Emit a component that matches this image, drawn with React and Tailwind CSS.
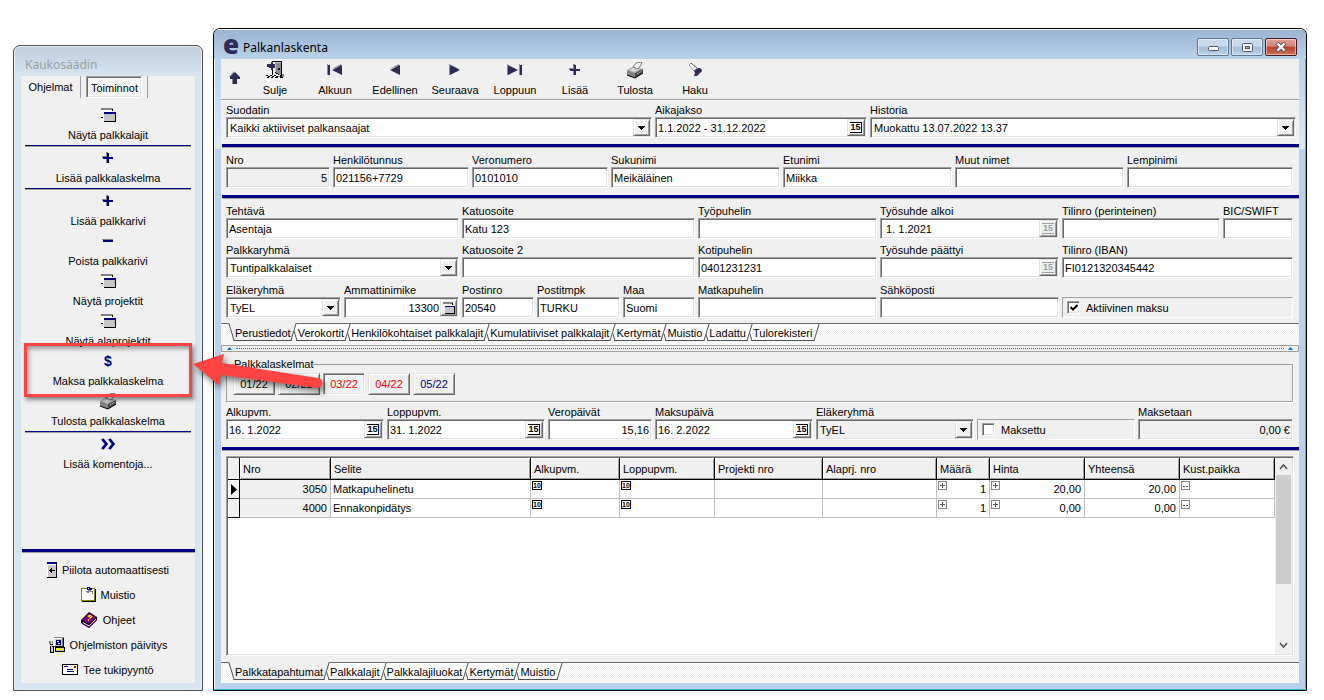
import React, { useId, useState } from "react";
import clsx from "clsx";

const sunken =
    "border border-t-[#a0a0a0] border-l-[#a0a0a0] border-b-white border-r-white shadow-[inset_1px_1px_0_#696969,inset_-1px_-1px_0_#e3e3e3]";
const raised =
    "border border-t-[#e3e3e3] border-l-[#e3e3e3] border-b-[#696969] border-r-[#696969] shadow-[inset_1px_1px_0_#fff,inset_-1px_-1px_0_#a0a0a0]";
const hatch = "bg-[repeating-conic-gradient(#f0f0f0_0_25%,#fff_0_50%)] bg-[length:2px_2px]";

/* ---------- icons ---------- */

const WindowsIcon = () => (
    <svg width="15" height="14" viewBox="0 0 15 14" shapeRendering="crispEdges" aria-hidden="true">
        <path fill="#848484" d="M0 0h12v2H0z" />
        <path fill="#fff" d="M0 2h12v1H0zM0 2h2v7H0z" />
        <path fill="#000" d="M11 1h1v2h-1zM0 9h3v1H0z" />
        <path fill="#fff" d="M2 3h12v1H2zM2 3h1v10H2z" />
        <path fill="#c6c6c6" d="M3 6h11v7H3z" />
        <path fill="#000084" d="M3 4h12v2H3z" />
        <path fill="#000" d="M14 6h1v8h-1zM3 13h12v1H3z" />
    </svg>
);

const PlusIcon = ({ color = "#000084" }) => (
    <svg width="12" height="12" viewBox="0 0 12 12" shapeRendering="crispEdges" aria-hidden="true">
        <path fill="#848484" d="M4 0h2v4H4zM0 4h5v2H0zM4 6h1v5H4z" />
        <path fill={color} d="M5 1h2v4h4v2H7v4H5V7H1V5h4z" />
    </svg>
);

const MinusIcon = () => (
    <svg width="12" height="4" viewBox="0 0 12 4" shapeRendering="crispEdges" aria-hidden="true">
        <path fill="#848484" d="M0 0h11v1H0z" />
        <path fill="#000084" d="M1 1h10v2H1z" />
    </svg>
);

const DollarIcon = () => <b className="text-[14px] leading-[18px] text-[#000084]" aria-hidden="true">$</b>;

const MoreIcon = () => (
    <svg width="16" height="12" viewBox="0 0 16 12" aria-hidden="true">
        <path fill="none" stroke="#848484" strokeWidth="2" d="M1.5 1l4 5-4 5M8.500 1l4 5-4 5" />
        <path fill="none" stroke="#000084" strokeWidth="2.500" d="M2.500 1l4 5-4 5M9.500 1l4 5-4 5" />
    </svg>
);

const PrinterIcon = () => (
    <svg width="17" height="17" viewBox="0 0 17 17" aria-hidden="true">
        <path fill="#a5a5a5" d="M0 8l7-4 9 3-8 4z" />
        <path fill="#d6d6d6" d="M2 8l5-3 6 2-6 3z" />
        <path fill="#848484" d="M0 8l8 3v5l-8-3z" />
        <path fill="#4a4a4a" d="M8 11l8-4v4l-8 5z" />
        <path fill="#fff" stroke="#444" strokeWidth=".7" d="M6 5l3-4 6-1-1 3-3 4z" />
        <path stroke="#000" strokeWidth="1" fill="none" d="M0 13l8 3 8-5" />
        <path stroke="#e7e7e7" strokeWidth="1" strokeDasharray="1 1" d="M10 12l5-3" />
    </svg>
);

const DoorIcon = () => (
    <svg width="19" height="18" viewBox="0 0 19 18" shapeRendering="crispEdges" aria-hidden="true">
        <path fill="#000" d="M6 0h10v15h-2V2H7v12H6z" />
        <path fill="#fff" d="M7 1h2v12H7z" />
        <path fill="#8c8c8c" d="M9 1h6v13h-2l-4-3z" />
        <path fill="#c6c6c6" d="M9 2h1v9H9zM10 1h5v1h-5z" />
        <path fill="#000" d="M12 7h2v2h-2zM9 11h1v1H9zM10 12h2v1h-2zM12 13h1v1h-1z" />
        <path fill="#2b2b55" d="M1 3h4V1h2v2h2v4H7v2H5V7H3V6H1z" />
        <path fill="#000" d="M0 14h2v1H0zM4 14h2v1H4zM8 14h2v1H8zM2 15h2v1H2zM6 15h2v1H6zM10 15h2v1h-2zM1 16h2v1H1zM5 16h2v1H5zM9 16h3v1H9zM14 15h3v2h-3z" />
        <path fill="#848484" d="M16 13h2v3h-2zM12 15h2v1h-2z" />
    </svg>
);

const FlashlightIcon = () => (
    <svg width="15" height="15" viewBox="0 0 15 15" aria-hidden="true">
        <path fill="#fff" stroke="#888" strokeWidth=".8" d="M1 2l2-2 6 5-3 3z" />
        <path stroke="#222" strokeDasharray="1 1" d="M3 0l6 5" />
        <path fill="#2b2b55" d="M6 8l4-3h2l2 2v1l-5 5H6l1-3z" />
        <path fill="#84206a" d="M8 11l3-2-1 3z" />
    </svg>
);

const UpIcon = () => (
    <svg width="12" height="14" viewBox="0 0 12 14" aria-hidden="true">
        <path fill="#8c8c8c" d="M5 0l-5 6h3v7h3z" />
        <path fill="#2b2b55" d="M6 1l5 5v2H8v5H4V8H1V6z" />
    </svg>
);

const FirstIcon = () => (
    <svg width="16" height="12" viewBox="0 0 16 12" aria-hidden="true">
        <path fill="#8c8c8c" d="M0 0h1v11H0zM14 0L4 5l10-3z" />
        <path fill="#2b2b55" d="M1 1h2v10H1zM15 1v10L5 6z" />
    </svg>
);
const PrevIcon = () => (
    <svg width="12" height="12" viewBox="0 0 12 12" aria-hidden="true">
        <path fill="#8c8c8c" d="M10 0L0 5l10-3z" />
        <path fill="#2b2b55" d="M11 1v10L1 6z" />
    </svg>
);
const NextIcon = () => (
    <svg width="12" height="12" viewBox="0 0 12 12" aria-hidden="true">
        <path fill="#8c8c8c" d="M0 0h1v11H0zM1 0l9 5H7z" />
        <path fill="#2b2b55" d="M1 1v10l10-5z" />
    </svg>
);
const LastIcon = () => (
    <svg width="16" height="12" viewBox="0 0 16 12" aria-hidden="true">
        <path fill="#8c8c8c" d="M0 0h1v11H0zM12 0h1v11h-1z" />
        <path fill="#2b2b55" d="M1 1v10l10-5zM13 1h2v10h-2z" />
    </svg>
);

const HideIcon = () => (
    <svg width="10" height="16" viewBox="0 0 10 16" shapeRendering="crispEdges" aria-hidden="true">
        <path fill="#000" d="M0 0h10v16H0z" />
        <path fill="#c6c6c6" d="M1 3h8v12H1z" />
        <path fill="#000084" d="M0 0h9v2H0z" />
        <path fill="#fff" d="M0 2h9v1H0zM0 2h1v13H0z" />
        <path fill="#000" d="M2 8h6v1H2zM3 7h1v3H3zM4 6h1v5H4z" />
    </svg>
);

const NoteIcon = () => (
    <svg width="15" height="15" viewBox="0 0 15 15" shapeRendering="crispEdges" aria-hidden="true">
        <path fill="#848400" d="M0 1h14v13H0z" />
        <path fill="#fff" d="M1 2h12v11H1z" />
        <path fill="#000" d="M14 2h1v13H1v-1h13z" />
        <path fill="#848484" d="M5 4h2v-1h3v1h2v3h-1V5H8v1H6V5H5z" />
        <path fill="#000084" d="M6 0h3v3H6zM9 1h2v2H9z" />
        <path fill="#fff" d="M7 1h1v1H7z" />
    </svg>
);

const BookIcon = () => (
    <svg width="17" height="16" viewBox="0 0 17 16" aria-hidden="true">
        <path fill="#000" d="M0 8l8-8 8 5v3l-8 8-8-5z" />
        <path fill="#840084" d="M1 8l7-7 7 4-7 7z" />
        <path fill="#fff" d="M2 10l6 3.500 7-7v1l-7 7-6-3.500z" />
        <path fill="#840084" d="M1 11l7 4 8-8v1l-8 8-7-4z" />
        <path fill="none" stroke="#ff0" strokeWidth="1.500" d="M7 4.500l2-1 1.500 1-2 2M7 8l1 .5" />
    </svg>
);

const ComputerIcon = () => (
    <svg width="16" height="16" viewBox="0 0 16 16" shapeRendering="crispEdges" aria-hidden="true">
        <path fill="#848484" d="M5 0h10v10H5z" />
        <path fill="#000" d="M14 1h1v9H6V9h8zM6 10h10v5H6z" />
        <path fill="#fff" d="M5 1h8v1H5zM5 1h1v8H5z" />
        <path fill="#c6c6c6" d="M6 2h7v7H6zM7 11h8v3H7z" />
        <path fill="#000084" d="M7 3h5v5H7z" />
        <path fill="#fff" d="M8 4h2v1H8zM9 6h2v1H9z" />
        <path fill="#ffff00" d="M7 11h3v2H7zM11 12h3v1h-3z" />
        <path fill="#848484" d="M0 4h2v3H0zM3 4h1v3H3z" />
        <path fill="#000" d="M1 7h3v1H1zM1 9h4v7H1z" />
        <path fill="#c6c6c6" d="M2 8h1v2H2zM2 10h2v5H2z" />
    </svg>
);

const MailIcon = () => (
    <svg width="16" height="11" viewBox="0 0 16 11" shapeRendering="crispEdges" aria-hidden="true">
        <path fill="#000" d="M0 0h16v11H0z" />
        <path fill="#fff" d="M1 1h14v9H1z" />
        <path fill="#000084" d="M2 2h4v1H2zM5 5h6v1H5zM5 7h7v1H5z" />
        <path fill="#e00000" d="M12 2h2v2h-2z" />
    </svg>
);

const DownArrow = () => (
    <svg width="7" height="4" viewBox="0 0 7 4" shapeRendering="crispEdges" aria-hidden="true">
        <path d="M0 0h7v1H6v1H5v1H4v1H3V3H2V2H1V1H0z" />
    </svg>
);

/* ---------- form parts ---------- */

const CalendarButton = ({ label, disabled }) => (
    <button
        type="button"
        aria-label={`${label}: kalenteri`}
        disabled={disabled}
        className={clsx("flex w-[18px] shrink-0 items-center justify-center bg-[#f0f0f0]", raised)}
    >
        <span
            className={clsx(
                "flex h-[11px] w-3 items-center justify-center border-y text-[9px] leading-[9px] font-bold",
                disabled ? "border-[#a0a0a0] text-[#a0a0a0]" : "border-black border-r border-r-[#000084] bg-white text-black"
            )}
        >
            15
        </span>
    </button>
);

const Field = ({ label, value = "", type = "text", right, gray, disabled }) => {
    const id = useId();
    return (
        <div className="min-w-0">
            <label htmlFor={id} className="block whitespace-nowrap">{label}</label>
            <div className={clsx("relative flex h-[21px] p-px", sunken, gray ? "bg-[#f0f0f0]" : "bg-white")}>
                {type === "select" ? (
                    <>
                        <select id={id} className="w-full min-w-0 appearance-none pl-[2px] outline-none">
                            <option>{value}</option>
                        </select>
                        <span className={clsx("pointer-events-none absolute inset-y-px right-px flex w-[17px] items-center justify-center bg-[#f0f0f0]", raised)}>
                            <DownArrow />
                        </span>
                    </>
                ) : (
                    <input
                        id={id}
                        defaultValue={value}
                        readOnly={gray}
                        className={clsx("w-full min-w-0 pr-px pl-px outline-none", right && "text-right", type === "lookup" && "pr-[3px]")}
                    />
                )}
                {type === "date" && <CalendarButton label={label} disabled={disabled} />}
                {type === "lookup" && (
                    <button type="button" aria-label={`${label}: valitse`} className={clsx("flex w-[17px] shrink-0 items-center justify-center bg-[#f0f0f0]", raised)}>
                        <span className="w-3 [&>svg]:w-3"><WindowsIcon /></span>
                    </button>
                )}
            </div>
        </div>
    );
};

const CheckPanel = ({ label, defaultChecked }) => (
    <div className="min-w-0 pt-[14px]">
        <label className="flex h-[21px] items-center gap-[6px] border border-t-[#a0a0a0] border-l-[#a0a0a0] border-r-white border-b-white pl-1">
            <span className="relative h-[13px] w-[13px]">
                <input type="checkbox" defaultChecked={defaultChecked} className={clsx("peer block h-[13px] w-[13px] appearance-none bg-white", sunken)} />
                <svg className="pointer-events-none absolute top-[3px] left-[3px] hidden peer-checked:block" width="8" height="8" viewBox="0 0 8 8" aria-hidden="true">
                    <path fill="none" stroke="#000" strokeWidth="2" d="M.5 3L3 5.500 7.500 1" />
                </svg>
            </span>
            {label}
        </label>
    </div>
);

const Rule = () => <div className="ml-px h-1 border-b border-[#a0a0a0] bg-[#000084]" />;

const SheetTabs = ({ tabs }) => {
    const [active, setActive] = useState(0);
    return (
        <div className={clsx("flex items-start border-t border-[#696969] pl-[10px]", hatch)} role="tablist">
            {tabs.map((tab, i) => {
                const selected = active === i;
                return (
                    <button
                        key={tab}
                        type="button"
                        role="tab"
                        aria-selected={selected}
                        onClick={() => setActive(i)}
                        style={{ zIndex: selected ? 30 : 20 - i }}
                        className={clsx(
                            "relative isolate -mr-px h-[17px] px-1 pt-px whitespace-nowrap",
                            "before:absolute before:inset-y-0 before:left-0 before:-z-10 before:w-[60%] before:skew-x-[17deg] before:border-b before:border-l before:border-[#505050]",
                            "after:absolute after:inset-y-0 after:right-0 after:-z-10 after:w-[60%] after:-skew-x-[17deg] after:border-r after:border-b after:border-[#505050]",
                            selected
                                ? "before:-top-px before:bg-[#f0f0f0] after:-top-px after:bg-[#f0f0f0]"
                                : "before:bg-white after:bg-white"
                        )}
                    >
                        {tab}
                    </button>
                );
            })}
        </div>
    );
};

/* ---------- remote control window ---------- */

const commands = [
    { icon: <WindowsIcon />, text: "Näytä palkkalajit", line: true },
    { icon: <PlusIcon />, text: "Lisää palkkalaskelma", line: true },
    { icon: <PlusIcon />, text: "Lisää palkkarivi" },
    { icon: <MinusIcon />, text: "Poista palkkarivi" },
    { icon: <WindowsIcon />, text: "Näytä projektit" },
    { icon: <WindowsIcon />, text: "Näytä alaprojektit" },
    { icon: <DollarIcon />, text: "Maksa palkkalaskelma" },
    { icon: <PrinterIcon />, text: "Tulosta palkkalaskelma", line: true },
    { icon: <MoreIcon />, text: "Lisää komentoja..." },
];

const links = [
    { icon: <HideIcon />, text: "Piilota automaattisesti" },
    { icon: <NoteIcon />, text: "Muistio" },
    { icon: <BookIcon />, text: "Ohjeet" },
    { icon: <ComputerIcon />, text: "Ohjelmiston päivitys" },
    { icon: <MailIcon />, text: "Tee tukipyyntö" },
];

const RemoteWindow = () => (
    <aside className="mt-[45px] flex w-[190px] shrink-0 flex-col rounded-t-[7px] border border-[#4d4d4d] bg-[#d7e4f2] bg-[linear-gradient(#bfcddb,#d7e4f2_30px)] px-[7px] pb-[7px] shadow-[inset_0_0_0_1px_#e9f1f9]">
        <h2 className="h-[30px] pt-3 pl-1 font-['Noto_Sans',sans-serif] text-[12px] text-[#9a9fa5]">Kaukosäädin</h2>
        <div className="flex grow flex-col bg-[#f0f0f0]">
            <div className="flex h-[22px] items-stretch">
                <button type="button" className="w-[59px] pb-px">Ohjelmat</button>
                <div className="mr-[5px] border-l border-[#a0a0a0]" />
                <button type="button" className={clsx("w-[56px] pt-px pl-px", sunken, hatch)}>Toiminnot</button>
                <div className="ml-[5px] border-l border-[#a0a0a0]" />
            </div>
            <div className="flex flex-col px-1 pt-[9px]">
                {commands.map((c) => (
                    <React.Fragment key={c.text}>
                        <button type="button" className={clsx("flex flex-col items-center gap-[5px]", !c.line && "mb-[5px]")}>
                            <span className="flex h-4 items-center">{c.icon}</span>
                            <span>{c.text}</span>
                        </button>
                        {c.line && <div className="mt-[3px] mb-[3px] h-[2px] border-b border-[#a0a0a0] bg-[#000084]" />}
                    </React.Fragment>
                ))}
            </div>
            <div className="mt-auto">
                <Rule />
                <div className="flex flex-col items-center pt-1 pb-px">
                    {links.map((l) => (
                        <a key={l.text} href="#" className="flex h-[25px] items-center gap-[5px]">
                            {l.icon}
                            {l.text}
                        </a>
                    ))}
                </div>
            </div>
        </div>
    </aside>
);

/* ---------- payroll window ---------- */

const caption = "flex h-[18px] w-8 items-center justify-center rounded-[2px] border shadow-[inset_0_0_0_1px_rgba(255,255,255,0.5)]";

const TitleBar = () => (
    <header className="flex h-[30px] items-center bg-[linear-gradient(#99b4d1,#b9d1ea)] pl-[9px] shadow-[inset_0_1px_0_#fff]">
        <span className="w-5 font-['Open_Sans',sans-serif] text-[26px] leading-[30px] font-extrabold text-[#2b2b55]" aria-hidden="true">e</span>
        <h1 className="grow pt-2 font-['Noto_Sans',sans-serif] text-[12px]">Palkanlaskenta</h1>
        <div className="flex gap-[2px] pt-[6px] pr-[9px]">
            <button type="button" aria-label="Pienennä" className={clsx(caption, "border-[#5c7591] bg-[linear-gradient(#c8daec_45%,#a3bdd7_50%,#b9d1ea)]")}>
                <svg className="mt-[3px]" width="11" height="5" viewBox="0 0 11 5" aria-hidden="true">
                    <rect x=".5" y=".5" width="10" height="4" rx="1" fill="#fff" stroke="#535666" />
                </svg>
            </button>
            <button type="button" aria-label="Suurenna" className={clsx(caption, "border-[#5c7591] bg-[linear-gradient(#c8daec_45%,#a3bdd7_50%,#b9d1ea)]")}>
                <svg width="11" height="9" viewBox="0 0 11 9" aria-hidden="true">
                    <rect x=".5" y=".5" width="10" height="8" rx="1" fill="#fff" stroke="#535666" />
                    <rect x="3.500" y="3.500" width="4" height="2" fill="#8fb0d0" stroke="#535666" />
                </svg>
            </button>
            <button type="button" aria-label="Sulje ikkuna" className={clsx(caption, "border-[#4a1420] bg-[linear-gradient(#e0a196,#d98576_45%,#b8402a_50%,#d0705a)]")}>
                <svg width="12" height="10" viewBox="0 0 12 10" aria-hidden="true">
                    <path d="M2 1l8 8M10 1L2 9" stroke="#535666" strokeWidth="4" />
                    <path d="M2.500 1.500l7 7M9.500 1.500l-7 7" stroke="#fff" strokeWidth="2.200" />
                </svg>
            </button>
        </div>
    </header>
);

const tools = [
    { icon: <DoorIcon />, text: "Sulje" },
    { icon: <FirstIcon />, text: "Alkuun" },
    { icon: <PrevIcon />, text: "Edellinen" },
    { icon: <NextIcon />, text: "Seuraava" },
    { icon: <LastIcon />, text: "Loppuun" },
    { icon: <PlusIcon color="#2b2b55" />, text: "Lisää" },
    { icon: <PrinterIcon />, text: "Tulosta" },
    { icon: <FlashlightIcon />, text: "Haku" },
];

const Toolbar = () => (
    <nav className="flex h-[42px] border-b border-white shadow-[inset_0_-1px_0_#a0a0a0]">
        <button type="button" aria-label="Ylös" className="flex w-6 items-center justify-center pb-1 pl-[3px]">
            <UpIcon />
        </button>
        {tools.map((t) => (
            <button key={t.text} type="button" className="flex w-[60px] flex-col items-center gap-1 pt-[2px]">
                <span className="flex h-[18px] items-center">{t.icon}</span>
                <span>{t.text}</span>
            </button>
        ))}
    </nav>
);

const Splitter = () => (
    <div className="flex h-[7px] items-center gap-1 border border-[#a0a0a0] bg-[#f0f0f0] px-[5px]">
        <svg width="5" height="3" viewBox="0 0 5 3" aria-hidden="true"><path fill="#0078d7" d="M2.500 0L5 3H0z" /></svg>
        <div className="grow border-t border-dotted border-[#0078d7]" />
        <svg width="5" height="3" viewBox="0 0 5 3" aria-hidden="true"><path fill="#0078d7" d="M2.500 0L5 3H0z" /></svg>
    </div>
);

const periods = [
    { text: "01/22" },
    { text: "02/22" },
    { text: "03/22", color: "text-[#ff0000]", pressed: true },
    { text: "04/22", color: "text-[#ff0000]" },
    { text: "05/22", color: "text-[#000084]" },
];

const columns = [
    { name: "Nro", width: "w-[91px]" },
    { name: "Selite", width: "" },
    { name: "Alkupvm.", width: "w-[89px]" },
    { name: "Loppupvm.", width: "w-[95px]" },
    { name: "Projekti nro", width: "w-[108px]" },
    { name: "Alaprj. nro", width: "w-[114px]" },
    { name: "Määrä", width: "w-[53px]" },
    { name: "Hinta", width: "w-[95px]" },
    { name: "Yhteensä", width: "w-[95px]" },
    { name: "Kust.paikka", width: "w-[95px]" },
];

const rows = [
    { nro: "3050", selite: "Matkapuhelinetu", maara: "1", hinta: "20,00", yht: "20,00" },
    { nro: "4000", selite: "Ennakonpidätys", maara: "1", hinta: "0,00", yht: "0,00" },
];

const CellDate = () => (
    <span className="ml-px flex h-[9px] w-[10px] items-center justify-center border border-black border-r-[#000084] bg-white text-[7px] leading-[7px] font-bold">10</span>
);

const CellMark = ({ plus }) => (
    <svg className="ml-px shrink-0" width="9" height="9" viewBox="0 0 9 9" shapeRendering="crispEdges" aria-hidden="true">
        <path fill="#848484" d="M0 0h9v9H0z" />
        <path fill="#fff" d="M1 1h7v7H1z" />
        <path fill="#555" d={plus ? "M2 4h5v1H2zM4 2h1v5H4z" : "M2 5h2v1H2zM5 5h2v1H5z"} />
    </svg>
);

const cell = "h-[19px] border-r border-b border-[#c0c0c0]";

const MarkedCell = ({ value }) => (
    <td className={cell}>
        <div className="flex h-[18px] items-start justify-between pt-px pr-[3px]">
            <CellMark plus />
            <span className="pt-px">{value}</span>
        </div>
    </td>
);

const SheetTable = () => (
    <div className={clsx("flex grow bg-white p-px", sunken)}>
        <div className="grow">
            <table className="w-full table-fixed border-separate border-spacing-0 bg-white">
                <thead>
                    <tr>
                        <th className="h-[22px] w-3 border-r border-b border-black bg-[#f0f0f0]" />
                        {columns.map((c) => (
                            <th
                                key={c.name}
                                className={clsx(
                                    "h-[22px] border-r border-b border-black bg-[#f0f0f0] pl-[3px] text-left font-normal shadow-[inset_1px_1px_0_#fff,inset_-1px_-1px_0_#a0a0a0]",
                                    c.width
                                )}
                            >
                                {c.name}
                            </th>
                        ))}
                    </tr>
                </thead>
                <tbody>
                    {rows.map((r, i) => (
                        <tr key={r.nro}>
                            <td className="h-[19px] border-r border-b border-black bg-[#f0f0f0] pl-[3px] shadow-[inset_1px_1px_0_#fff]">
                                {i === 0 && (
                                    <svg width="6" height="11" viewBox="0 0 6 11" aria-hidden="true"><path d="M0 0l6 5.500L0 11z" /></svg>
                                )}
                            </td>
                            <td className={clsx(cell, "bg-[#f0f0f0] pr-[3px] text-right")}>{r.nro}</td>
                            <td className={clsx(cell, "pl-[2px]")}>{r.selite}</td>
                            <td className={clsx(cell, "pt-px align-top")}><CellDate /></td>
                            <td className={clsx(cell, "pt-px align-top")}><CellDate /></td>
                            <td className={cell} />
                            <td className={cell} />
                            <MarkedCell value={r.maara} />
                            <MarkedCell value={r.hinta} />
                            <td className={clsx(cell, "pr-[3px] text-right")}>{r.yht}</td>
                            <td className={clsx(cell, "pt-px align-top")}><CellMark /></td>
                        </tr>
                    ))}
                </tbody>
            </table>
        </div>
        <div className="flex w-[17px] shrink-0 flex-col items-center bg-[#f0f0f0]">
            <svg className="h-[17px] w-[9px]" viewBox="0 0 9 17" aria-hidden="true"><path d="M1 11l3.500-4L8 11" fill="none" stroke="#505050" strokeWidth="1.500" /></svg>
            <div className="h-[109px] w-[15px] bg-[#cdcdcd]" />
            <svg className="mt-auto h-[17px] w-[9px]" viewBox="0 0 9 17" aria-hidden="true"><path d="M1 6l3.500 4L8 6" fill="none" stroke="#505050" strokeWidth="1.500" /></svg>
        </div>
    </div>
);

const PayrollWindow = () => (
    <main className="mt-7 flex min-w-0 grow flex-col overflow-hidden rounded-t-[7px] border border-black bg-[#b9d1ea]">
        <TitleBar />
        <div className="flex grow flex-col bg-[linear-gradient(#b9d1ea,#dce8f5_90px,#b9d1ea_90px)] px-[7px] pb-[7px] shadow-[inset_-1px_-1px_0_#3fb8d8,inset_1px_0_0_#fff]">
            <div className="flex grow flex-col bg-[#f0f0f0]">
                <Toolbar />
                <section className="grid grid-cols-[426fr_212fr_426fr] gap-[3px] pt-[2px] pr-[3px] pb-[6px] pl-[5px]">
                    <Field label="Suodatin" type="select" value="Kaikki aktiiviset palkansaajat" />
                    <Field label="Aikajakso" type="date" value="1.1.2022 - 31.12.2022" />
                    <Field label="Historia" type="select" value="Muokattu 13.07.2022 13.37" />
                </section>
                <Rule />
                <section className="grid grid-cols-[104fr_136fr_136fr_169fr_169fr_169fr_166fr] gap-[3px] pt-[5px] pr-[6px] pb-[7px] pl-[5px]">
                    <Field label="Nro" value="5" gray right />
                    <Field label="Henkilötunnus" value="021156+7729" />
                    <Field label="Veronumero" value="0101010" />
                    <Field label="Sukunimi" value="Meikäläinen" />
                    <Field label="Etunimi" value="Miikka" />
                    <Field label="Muut nimet" />
                    <Field label="Lempinimi" />
                </section>
                <Rule />
                <section className="flex flex-col gap-1 pt-[5px] pr-[6px] pb-[5px] pl-[5px]">
                    <div className="grid grid-cols-[233fr_233fr_179fr_179fr_158fr_70fr] gap-[3px]">
                        <Field label="Tehtävä" value="Asentaja" />
                        <Field label="Katuosoite" value="Katu 123" />
                        <Field label="Työpuhelin" />
                        <Field label="Työsuhde alkoi" type="date" value=" 1. 1.2021" disabled />
                        <Field label="Tilinro (perinteinen)" />
                        <Field label="BIC/SWIFT" />
                    </div>
                    <div className="grid grid-cols-[233fr_233fr_179fr_179fr_231fr] gap-[3px]">
                        <Field label="Palkkaryhmä" type="select" value="Tuntipalkkalaiset" />
                        <Field label="Katuosoite 2" />
                        <Field label="Kotipuhelin" value="0401231231" />
                        <Field label="Työsuhde päättyi" type="date" disabled />
                        <Field label="Tilinro (IBAN)" value="FI0121320345442" />
                    </div>
                    <div className="grid grid-cols-[115fr_115fr_72fr_83fr_72fr_179fr_179fr_231fr] gap-[3px] pt-px">
                        <Field label="Eläkeryhmä" type="select" value="TyEL" />
                        <Field label="Ammattinimike" type="lookup" value="13300" right />
                        <Field label="Postinro" value="20540" />
                        <Field label="Postitmpk" value="TURKU" />
                        <Field label="Maa" value="Suomi" />
                        <Field label="Matkapuhelin" />
                        <Field label="Sähköposti" />
                        <CheckPanel label="Aktiivinen maksu" defaultChecked />
                    </div>
                </section>
                <div className={clsx("h-[22px]", hatch)}>
                    <SheetTabs
                        tabs={["Perustiedot", "Verokortit", "Henkilökohtaiset palkkalajit", "Kumulatiiviset palkkalajit", "Kertymät", "Muistio", "Ladattu", "Tulorekisteri"]}
                    />
                </div>
                <Splitter />
                <section className="pt-[5px] pr-[6px] pb-[7px] pl-[5px]">
                    <fieldset className="flex gap-[3px] border border-[#a0a0a0] px-[6px] pt-[2px] pb-[6px] shadow-[1px_1px_0_#fff]">
                        <legend className="ml-px">Palkkalaskelmat</legend>
                        {periods.map((p) => (
                            <button
                                key={p.text}
                                type="button"
                                className={clsx("h-[22px] w-[42px]", p.color, p.pressed ? ["bg-[#f5f5f5]", sunken] : ["bg-[#f0f0f0]", raised])}
                            >
                                {p.text}
                            </button>
                        ))}
                    </fieldset>
                    <div className="mt-[3px] grid grid-cols-[158fr_158fr_104fr_158fr_158fr_158fr_155fr] gap-[3px]">
                        <Field label="Alkupvm." type="date" value="16. 1.2022" />
                        <Field label="Loppupvm." type="date" value="31. 1.2022" />
                        <Field label="Veropäivät" value="15,16" right />
                        <Field label="Maksupäivä" type="date" value="16. 2.2022" />
                        <Field label="Eläkeryhmä" type="select" value="TyEL" gray />
                        <CheckPanel label="Maksettu" />
                        <Field label="Maksetaan" value="0,00 €" gray right />
                    </div>
                </section>
                <Rule />
                <section className="flex grow flex-col pt-[5px] pr-[5px] pb-[6px] pl-[5px]">
                    <SheetTable />
                </section>
                <div className={clsx("h-[21px]", hatch)}>
                    <SheetTabs tabs={["Palkkatapahtumat", "Palkkalajit", "Palkkalajiluokat", "Kertymät", "Muistio"]} />
                </div>
            </div>
        </div>
    </main>
);

/* red frame round the pay command and the arrow that points at it */
const Callout = () => (
    <div className="pointer-events-none absolute top-[343px] left-6 z-40" aria-hidden="true">
        <div className="h-[54px] w-[168px] border-[3px] border-[#ff4343] shadow-[2px_3px_4px_rgba(0,0,0,0.45),inset_2px_3px_4px_rgba(0,0,0,0.35)]" />
        <svg className="absolute top-0 left-[168px] overflow-visible drop-shadow-[2px_4px_3px_rgba(0,0,0,0.5)]" width="136" height="56" viewBox="0 0 136 56">
            <path fill="#ff4343" d="M1 21L32 11L30 20L126 35A5 5 0 0 1 125 45L29 32L27 42Z" />
        </svg>
    </div>
);

const App = () => {
    return (
        <div className="relative flex min-h-screen gap-[10px] bg-white pr-[17px] pb-[9px] pl-[13px] font-['Liberation_Sans',Arial,sans-serif] text-[11px] leading-[14px] text-black">
            <RemoteWindow />
            <PayrollWindow />
            <Callout />
        </div>
    );
};

export default App;
